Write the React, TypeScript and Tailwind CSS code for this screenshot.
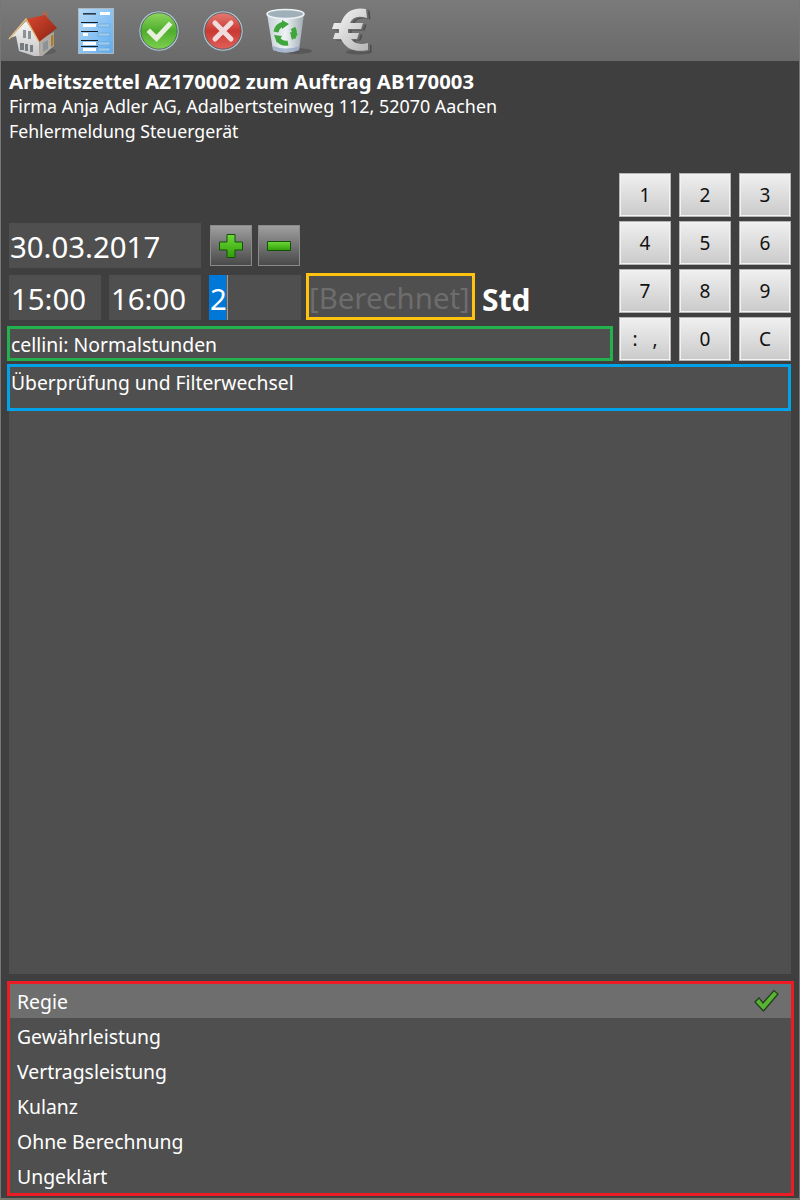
const font = "font-['Noto_Sans','Open_Sans',sans-serif]"

function HouseIcon() {
  return (
    <svg width="50" height="50" viewBox="0 0 50 50" className="shrink-0">
      <defs>
        <linearGradient id="wall" x1="0" y1="0" x2="0" y2="1">
          <stop offset="0" stopColor="#f7f7f7" />
          <stop offset="1" stopColor="#c4c4c4" />
        </linearGradient>
        <linearGradient id="roof" x1="0" y1="0" x2="1" y2="1">
          <stop offset="0" stopColor="#d9482f" />
          <stop offset="1" stopColor="#8a2313" />
        </linearGradient>
      </defs>
      <ellipse cx="32" cy="45" rx="17" ry="4" fill="#4e4e4e" opacity="0.5" />
      <rect x="36" y="6" width="4" height="9" fill="#b5654a" />
      <path d="M3 32 L19 15 L32 34 L33 52 L12 45 L9 30 Z" fill="url(#wall)" />
      <path d="M32 34 L47 26 L47 40 L33 52 Z" fill="#b0aca3" />
      <path d="M19 13 L38 9 L50 22 L32 36 Z" fill="url(#roof)" />
      <path d="M2 33 L19 13 L32 36" fill="none" stroke="#e3bc7e" strokeWidth="1.4" />
      <rect x="16" y="24" width="3" height="8" fill="#8c9298" />
      <rect x="21" y="25" width="3" height="8" fill="#8c9298" />
      <rect x="13" y="37" width="4" height="7" fill="#777c80" />
      <rect x="18" y="38" width="3" height="7" fill="#777c80" />
      <rect x="23" y="39" width="3" height="7" fill="#777c80" />
      <path d="M36 37 L41 34 L41 43 L36 46 Z" fill="#8d9296" />
      <path d="M44 30 L46.5 28 L46.5 39 L44 41 Z" fill="#b07a2c" />
    </svg>
  )
}

function FormIcon() {
  const rows = [
    { y: 17, left: 13 },
    { y: 26, left: 5 },
    { y: 35, left: 13 },
    { y: 41, left: 13 },
  ]
  return (
    <svg width="36" height="46" viewBox="0 0 36 46" className="shrink-0">
      <defs>
        <linearGradient id="sheet" x1="0" y1="0" x2="1" y2="1">
          <stop offset="0" stopColor="#b7daf7" />
          <stop offset="1" stopColor="#5fadf0" />
        </linearGradient>
      </defs>
      <rect x="0.5" y="0.5" width="35" height="45" fill="url(#sheet)" stroke="#aeb8c0" />
      <rect x="5" y="5" width="13" height="1.6" fill="#2b3844" />
      <rect x="22" y="4" width="10" height="3" fill="#fff" />
      {rows.map((r) => (
        <g key={r.y}>
          <rect x="3" y={r.y - 3} width="17" height="1" fill="#141c24" />
          <rect x="5" y={r.y - 1} width={r.left} height="3" fill="#fff" />
          <rect x="20" y={r.y - 1} width="12" height="3" fill="#9acbef" stroke="#5a8db8" strokeWidth="0.4" />
        </g>
      ))}
    </svg>
  )
}

function RoundIcon({ kind }: { kind: 'ok' | 'no' }) {
  const id = kind === 'ok' ? 'okFill' : 'noFill'
  return (
    <svg width="42" height="42" viewBox="0 0 42 42" className="shrink-0">
      <defs>
        <linearGradient id={id} x1="0" y1="0" x2="0" y2="1">
          <stop offset="0" stopColor={kind === 'ok' ? '#8fd65f' : '#e47b72'} />
          <stop offset="0.5" stopColor={kind === 'ok' ? '#4eae2c' : '#c93a33'} />
          <stop offset="1" stopColor={kind === 'ok' ? '#7ed04e' : '#e0605a'} />
        </linearGradient>
      </defs>
      <circle cx="21" cy="21" r="20.2" fill="#b7c6cc" stroke="#5c6a70" strokeWidth="0.8" />
      <circle cx="21" cy="21" r="18.2" fill={`url(#${id})`} stroke="#43525a" strokeWidth="0.8" />
      {kind === 'ok' ? (
        <path d="M12 22 L18.5 28.5 L31 15" fill="none" stroke="#e6f0dc" strokeWidth="5" strokeLinecap="square" />
      ) : (
        <path d="M13 13 L29 29 M29 13 L13 29" fill="none" stroke="#f0dcdc" strokeWidth="5" strokeLinecap="round" />
      )}
    </svg>
  )
}

function TrashIcon() {
  return (
    <svg width="46" height="48" viewBox="0 0 46 48" className="shrink-0">
      <defs>
        <linearGradient id="bin" x1="0" y1="0" x2="1" y2="0">
          <stop offset="0" stopColor="#c5d0d7" />
          <stop offset="0.5" stopColor="#eef2f4" />
          <stop offset="1" stopColor="#9eabb3" />
        </linearGradient>
      </defs>
      <ellipse cx="31" cy="44" rx="15" ry="3" fill="#444" opacity="0.5" />
      <path d="M1 7 L7 43 Q20 48 33 43 L38 7 Z" fill="url(#bin)" />
      <path d="M7 39 Q20 44 34 39 L33 43 Q20 48 7 43 Z" fill="#8fa2c0" opacity="0.7" />
      <ellipse cx="19.5" cy="7" rx="18.5" ry="4.5" fill="#9fb0b9" stroke="#edf2f4" strokeWidth="1.6" />
      <g fill="none" stroke="#3ea63a" strokeWidth="5">
        <path d="M10 25 A10 10 0 0 1 18 17" />
        <path d="M27 21 A10 10 0 0 1 27 31" />
        <path d="M12 32 A10 10 0 0 0 22 36" />
      </g>
      <path d="M16 13 L23 17 L16 22 Z M26 33 L32 27 L24 25 Z M8 28 L16 29 L11 36 Z" fill="#3ea63a" />
    </svg>
  )
}

const euroPath =
  'M36 2 L37 11 Q24 7 20 16 L33 16 L31 22 L18 22 L18 26 L29 26 L27 32 L21 32 Q26 39 38 36 L38 43 Q18 47 11 32 L3 32 L5 26 L9 26 L9 22 L2 22 L4 16 L11 16 Q17 -1 36 2 Z'

function EuroIcon() {
  return (
    <svg width="44" height="48" viewBox="0 0 44 48" className="shrink-0">
      <defs>
        <linearGradient id="euro" x1="0" y1="0" x2="1" y2="1">
          <stop offset="0" stopColor="#fafafa" />
          <stop offset="1" stopColor="#b5b5b5" />
        </linearGradient>
      </defs>
      <ellipse cx="29" cy="45" rx="13" ry="2.5" fill="#444" opacity="0.5" />
      <path d={euroPath} fill="#4d4d4d" transform="translate(3.5 1.5)" />
      <path d={euroPath} fill="#6b6b6b" transform="translate(2 1)" />
      <path d={euroPath} fill="url(#euro)" />
    </svg>
  )
}

function StepButton({ sign }: { sign: '+' | '-' }) {
  return (
    <button className="flex h-[41px] w-[42px] items-center justify-center border border-[#8a8a8a] bg-gradient-to-b from-[#a0a0a0] to-[#4a4a4a]">
      <svg width="26" height="26" viewBox="0 0 26 26">
        <defs>
          <linearGradient id={`step${sign === '+' ? 'P' : 'M'}`} x1="0" y1="0" x2="0" y2="1">
            <stop offset="0" stopColor="#6fd93a" />
            <stop offset="1" stopColor="#2f9e08" />
          </linearGradient>
        </defs>
        <path
          d={sign === '+' ? 'M9 1.5 H17 V9 H24.5 V17 H17 V24.5 H9 V17 H1.5 V9 H9 Z' : 'M1.5 8.5 H24.5 V17.5 H1.5 Z'}
          fill={`url(#step${sign === '+' ? 'P' : 'M'})`}
          stroke="#14500a"
        />
      </svg>
    </button>
  )
}

const keys = ['1', '2', '3', '4', '5', '6', '7', '8', '9', ':   ,', '0', 'C']
const billing = ['Regie', 'Gewährleistung', 'Vertragsleistung', 'Kulanz', 'Ohne Berechnung', 'Ungeklärt']

export default function App() {
  return (
    <div className={`${font} flex h-[1200px] w-[800px] flex-col overflow-hidden border-x border-b-2 border-x-[#777777] border-b-[#76766a] bg-[#3f3f3f] text-white`}>
      <div className="flex h-[61px] shrink-0 items-center bg-gradient-to-b from-[#7a7a7a] to-[#6a6a6a] pl-[6px]">
        <HouseIcon />
        <div className="ml-[21px] flex"><FormIcon /></div>
        <div className="ml-[24px] flex"><RoundIcon kind="ok" /></div>
        <div className="ml-[22px] flex"><RoundIcon kind="no" /></div>
        <div className="ml-[22px] flex"><TrashIcon /></div>
        <div className="ml-[18px] flex"><EuroIcon /></div>
      </div>

      <div className="h-[104px] shrink-0 pl-2 pt-[8px]">
        <h1 className="text-[20.3px] leading-[25px] font-bold">Arbeitszettel AZ170002 zum Auftrag AB170003</h1>
        <p className="text-[17.9px] leading-[25px]">Firma Anja Adler AG, Adalbertsteinweg 112, 52070 Aachen</p>
        <p className="text-[17.7px] leading-[25px]">Fehlermeldung Steuergerät</p>
      </div>

      <div className="flex h-[196px] shrink-0 pl-[6px] pr-[8px] pt-[8px]">
        <div className="flex w-[612px] shrink-0 flex-col justify-end">
          <div className="flex items-center pl-[2px]">
            <div className="h-[45px] w-[192px] bg-[#4f4f4f] pl-[1px] text-[29.4px] leading-[48px]">30.03.2017</div>
            <div className="ml-[9px] flex gap-[6px]">
              <StepButton sign="+" />
              <StepButton sign="-" />
            </div>
          </div>
          <div className="mt-[5px] flex h-[47px] items-center pl-[2px]">
            <div className="mt-[2px] h-[45px] w-[92px] bg-[#4f4f4f] pl-[2px] text-[29.4px] leading-[48px]">15:00</div>
            <div className="ml-[8px] mt-[2px] h-[45px] w-[92px] bg-[#4f4f4f] pl-[2px] text-[29.4px] leading-[48px]">16:00</div>
            <div className="ml-[8px] mt-[2px] flex h-[45px] w-[92px] bg-[#4f4f4f] text-[29.4px] leading-[48px]">
              <span className="w-[19px] border-r border-[#e08a3c] bg-[#0078d7] pl-[1px]">2</span>
            </div>
            <div className="ml-[5px] flex h-[47px] w-[169px] items-center border-[3px] border-[#ffc20e] bg-[#4f4f4f] pt-[3px] text-[29.4px] text-[#6d6d6d]">
              [Berechnet]
            </div>
            <span className="ml-[7px] pt-[7px] text-[30px] leading-[40px] font-bold">Std</span>
          </div>
          <div className="mt-[6px] h-[35px] w-[606px] border-[3px] border-[#22b14c] bg-[#4f4f4f] pl-[1px] text-[19.4px] leading-[31px]">
            cellini: Normalstunden
          </div>
        </div>
        <div className="grid grid-cols-[52px_52px_52px] grid-rows-[44px_44px_44px_44px] gap-x-2 gap-y-1">
          {keys.map((k) => (
            <button
              key={k}
              className="whitespace-pre border border-[#b5b5b5] bg-gradient-to-b from-[#f0f0f0] to-[#cacaca] text-[19px] text-[#111] shadow-[inset_0_0_0_1px_#f2f2f2]"
            >
              {k}
            </button>
          ))}
        </div>
      </div>

      <div className="mx-2 mt-[3px] h-[610px] shrink-0 bg-[#4f4f4f]">
        <div className="ml-[-2px] h-[47px] border-[3px] border-[#00a2e8] pl-[1px] text-[19.3px] leading-[31px]">
          Überprüfung und Filterwechsel
        </div>
      </div>

      <ul className="ml-[6px] mt-[7px] w-[787px] border-[3px] border-[#ed1c24] bg-[#4f4f4f] text-[19.4px]">
        {billing.map((b, i) => (
          <li
            key={b}
            className={`flex items-center justify-between pl-[7px] pr-[12px] ${i === 0 ? 'h-[34px] bg-[#6e6e6e]' : 'h-[35px]'}`}
          >
            <span className="pt-[2px]">{b}</span>
            {i === 0 && (
              <svg width="26" height="24" viewBox="0 0 26 24">
                <path d="M2 13 L6 9 L10 14 L21 1.5 L25 5 L10.5 22 Z" fill="#58b432" stroke="#1f3d1a" strokeWidth="1.2" />
              </svg>
            )}
          </li>
        ))}
      </ul>
    </div>
  )
}
